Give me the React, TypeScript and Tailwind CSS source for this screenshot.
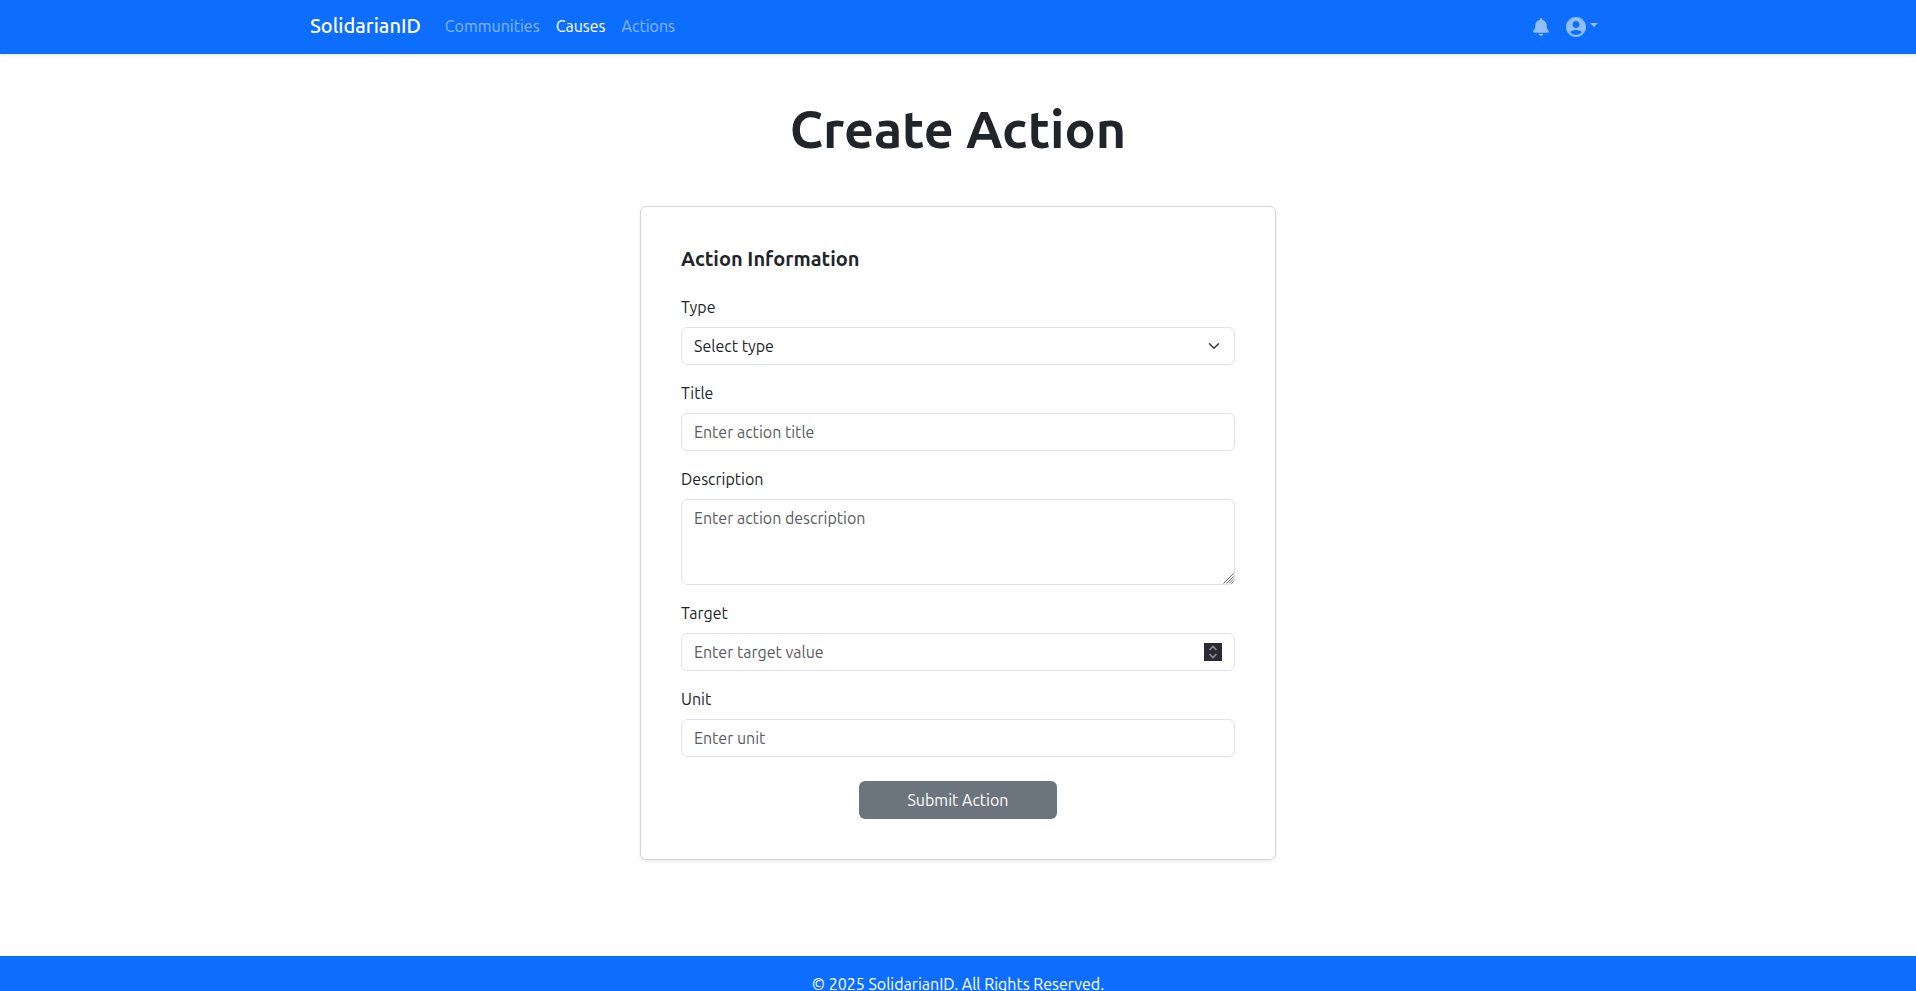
import React from "react";
import { FaBell } from "react-icons/fa";
import { MdAccountCircle } from "react-icons/md";

const control =
  "block w-full rounded-md border border-[#dee2e6] bg-white px-3 py-[6px] text-base leading-6 text-[#212529] placeholder-[#595c5f] placeholder:opacity-100";

function Field({ id, label, children }: { id: string; label: string; children: React.ReactNode }) {
  return (
    <div className="mb-4">
      <label htmlFor={id} className="mb-2 block leading-6">
        {label}
      </label>
      <div className="relative">{children}</div>
    </div>
  );
}

function Header() {
  return (
    <nav className="relative bg-[#0d6efd] shadow-[0_2px_4px_rgba(0,0,0,0.075)]">
      <div className="mx-auto flex h-[54px] max-w-[1320px] items-center px-3">
        <a href="#" className="mr-6 pb-[2px] text-xl font-medium text-white">
          SolidarianID
        </a>
        <div className="flex gap-4 pb-[2px] text-white/50">
          <a href="#">Communities</a>
          <a href="#" className="text-white">
            Causes
          </a>
          <a href="#">Actions</a>
        </div>
        <div className="ml-auto mr-2 flex items-center gap-[15px] text-white/55">
          <button type="button" aria-label="Notifications">
            <FaBell className="h-[18px] w-4" />
          </button>
          <button type="button" aria-label="Account" className="flex items-center gap-[2px]">
            <MdAccountCircle className="size-6" />
            <svg viewBox="0 0 8 8" className="size-2" fill="currentColor" aria-hidden="true">
              <path d="M0 0h8L4 4z" />
            </svg>
          </button>
        </div>
      </div>
    </nav>
  );
}

export default function App() {
  return (
    <div className="flex min-h-screen flex-col bg-white font-['Ubuntu','Noto_Sans',sans-serif] text-base text-[#212529]">
      <Header />
      <main className="mx-auto w-full max-w-[1320px] grow px-3 pt-12 pb-24">
        <h1 className="mb-[50px] text-center text-[52px] leading-[54px] font-semibold">Create Action</h1>
        <form className="mx-auto w-full max-w-[636px] rounded-md border border-[#d3d4d5] p-10 shadow-[0_2px_4px_rgba(0,0,0,0.075)]">
          <h2 className="mb-6 text-xl leading-6 font-semibold">Action Information</h2>
          <Field id="type" label="Type">
            <select id="type" className={`${control} appearance-none`}>
              <option>Select type</option>
            </select>
            <svg viewBox="0 0 16 16" className="pointer-events-none absolute top-[13px] right-[13px] h-3 w-4" fill="none" stroke="#343a40" strokeWidth="2" strokeLinecap="round" strokeLinejoin="round" aria-hidden="true">
              <path d="m2 5 6 6 6-6" />
            </svg>
          </Field>
          <Field id="title" label="Title">
            <input id="title" type="text" placeholder="Enter action title" className={control} />
          </Field>
          <Field id="description" label="Description">
            <textarea id="description" rows={3} placeholder="Enter action description" className={`${control} resize-none`} />
            <svg viewBox="0 0 11 11" className="pointer-events-none absolute right-px bottom-px size-[11px]" fill="none" stroke="#6b6b6b" aria-hidden="true">
              <path d="M0.500 10.500l10-10M3.500 10.500l7-7M6 10.500l4.500-4.500M8.500 10.500l2-2" />
            </svg>
          </Field>
          <Field id="target" label="Target">
            <input
              id="target"
              type="number"
              placeholder="Enter target value"
              className={`${control} [appearance:textfield] [&::-webkit-inner-spin-button]:appearance-none`}
            />
            <svg viewBox="0 0 18 18" className="pointer-events-none absolute top-[10px] right-[13px] size-[18px] bg-[#2b2a33]" fill="none" stroke="#8f8f9d" strokeWidth="1.6" aria-hidden="true">
              <path d="M5.500 7l3.500-3.500 3.500 3.500M5.500 11l3.500 3.500 3.500-3.500" />
            </svg>
          </Field>
          <Field id="unit" label="Unit">
            <input id="unit" type="text" placeholder="Enter unit" className={control} />
          </Field>
          <div className="mt-6 flex justify-center">
            <button type="submit" className="rounded-md bg-[#6c757d] px-12 py-[7px] leading-6 text-white">
              Submit Action
            </button>
          </div>
        </form>
      </main>
      <footer className="bg-[#0d6efd] py-4 text-center text-white">© 2025 SolidarianID. All Rights Reserved.</footer>
    </div>
  );
}
